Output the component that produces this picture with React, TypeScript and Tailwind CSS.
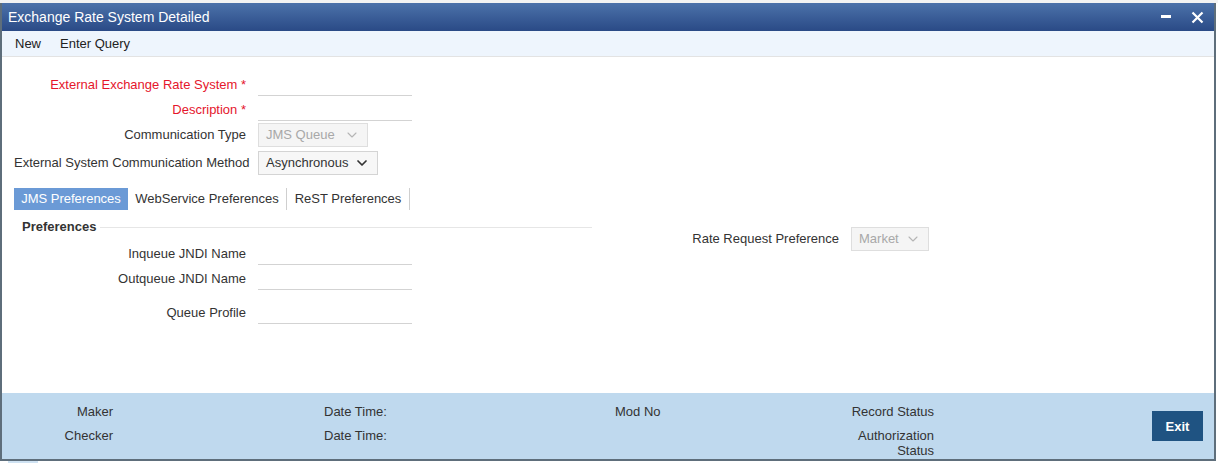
import { ChevronDown } from "lucide-react";

const font = "font-['Liberation_Sans',Arial,sans-serif]";

function TextField({ label, required }: { label: string; required?: boolean }) {
  return (
    <div className="flex h-[25px] items-center">
      <div
        className={`w-[244px] pr-[12px] text-right text-[13px] whitespace-nowrap ${required ? "text-[#e5162c]" : "text-[#333]"}`}
      >
        {label}
        {required && <span> *</span>}
      </div>
      <div className="h-[24px] w-[154px] self-start border-b border-[#d3d3d3]" />
    </div>
  );
}

function Select({
  value,
  width,
  disabled,
}: {
  value: string;
  width: string;
  disabled?: boolean;
}) {
  return (
    <div
      className={`flex h-[24px] items-center justify-between border pl-[7px] pr-[7px] text-[13px] ${width} ${
        disabled
          ? "border-[#dedede] bg-[#f5f5f5] text-[#a8a8a8]"
          : "border-[#d4d4d4] bg-[#f7f7f7] text-[#333]"
      }`}
    >
      <span>{value}</span>
      <ChevronDown
        size={16}
        strokeWidth={disabled ? 1.6 : 2.6}
        className={disabled ? "text-[#b5b5b5]" : "text-[#333]"}
      />
    </div>
  );
}

export default function App() {
  return (
    <div className={`h-[463px] w-[1218px] overflow-hidden bg-white ${font}`}>
      <div className="h-[3px] bg-[#f3f3f3]" />
      <div className="w-[1216px] border-x-2 border-b-2 border-[#5e6e7b]">
        {/* title bar */}
        <div className="flex h-[28px] items-center justify-between bg-gradient-to-b from-[#4c72aa] to-[#2a4a86] pl-[6px] pr-[10px]">
          <span className="text-[14px] text-white">Exchange Rate System Detailed</span>
          <div className="flex items-center gap-[20px]">
            <svg width="10" height="4" viewBox="0 0 10 4">
              <rect x="0" y="0" width="10" height="3" fill="white" />
            </svg>
            <svg width="13" height="13" viewBox="0 0 13 13">
              <path d="M1.5 1.5 L11.5 11.5 M11.5 1.5 L1.5 11.5" stroke="white" strokeWidth="2.2" />
            </svg>
          </div>
        </div>

        {/* menu */}
        <div className="flex h-[26px] items-center gap-[19px] border-b border-[#e3e3e3] bg-[#eef5fd] pl-[13px] text-[13px] text-[#222]">
          <span>New</span>
          <span>Enter Query</span>
        </div>

        {/* body */}
        <div className="h-[336px] pl-[12px] pt-[15px]">
          <TextField label="External Exchange Rate System" required />
          <TextField label="Description" required />
          <div className="flex h-[26px] items-center">
            <div className="w-[244px] pr-[12px] text-right text-[13px] text-[#333]">Communication Type</div>
            <Select value="JMS Queue" width="w-[110px]" disabled />
          </div>
          <div className="mt-[2px] flex h-[26px] items-center">
            <div className="w-[244px] pr-[12px] text-right text-[13px] text-[#333] whitespace-nowrap">
              External System Communication Method
            </div>
            <Select value="Asynchronous" width="w-[120px]" />
          </div>

          {/* tabs */}
          <div className="mt-[12px] flex h-[22px] items-stretch text-[13px]">
            <div className="flex w-[114px] items-center justify-center bg-[#6b9ad6] text-white">JMS Preferences</div>
            <div className="flex w-[159px] items-center justify-center border-r border-[#cfcfcf] text-[#333]">
              WebService Preferences
            </div>
            <div className="flex w-[123px] items-center justify-center border-r border-[#cfcfcf] text-[#333]">
              ReST Preferences
            </div>
          </div>

          <div className="flex">
            <div className="w-[578px]">
              <div className="mt-[7px] flex h-[19px] items-center gap-[4px] pl-[8px]">
                <span className="text-[13px] font-bold text-[#333]">Preferences</span>
                <div className="mt-[2px] h-px flex-1 bg-[#e6e6e6]" />
              </div>
              <div className="mt-[5px]">
                <TextField label="Inqueue JNDI Name" />
                <TextField label="Outqueue JNDI Name" />
                <div className="mt-[9px]">
                  <TextField label="Queue Profile" />
                </div>
              </div>
            </div>
            <div className="mt-[17px] flex h-[24px] items-center">
              <div className="w-[259px] pr-[12px] text-right text-[13px] text-[#333]">Rate Request Preference</div>
              <Select value="Market" width="w-[78px]" disabled />
            </div>
          </div>
        </div>

        {/* footer */}
        <div className="flex h-[66px] items-center bg-[#bfd9ee] text-[13px] leading-[15px] text-[#333]">
          <div className="grid w-[932px] grid-cols-[111px_211px_291px_100px_219px] gap-y-[9px] self-start pt-[11px]">
            <div className="text-right">Maker</div>
            <div />
            <div>Date Time:</div>
            <div>Mod No</div>
            <div className="text-right">Record Status</div>
            <div className="text-right">Checker</div>
            <div />
            <div>Date Time:</div>
            <div />
            <div className="text-right">
              Authorization
              <br />
              Status
            </div>
          </div>
          <div className="ml-[218px] flex h-[30px] w-[51px] items-center justify-center bg-[#1f5382] text-[13px] font-bold text-white">
            Exit
          </div>
        </div>
      </div>
      <div className="ml-[8px] h-[2px] w-[30px] bg-[#cfe2f2]" />
    </div>
  );
}
